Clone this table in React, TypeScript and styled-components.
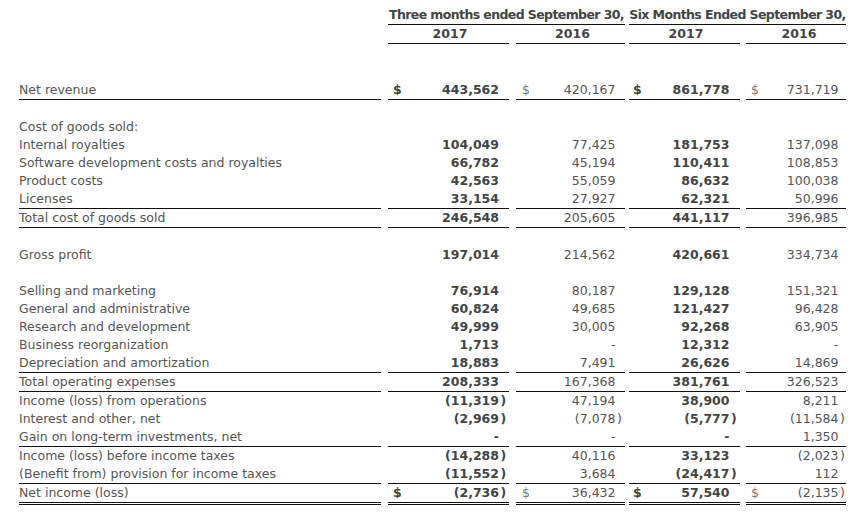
import React from "react";
import styled, { createGlobalStyle, css } from "styled-components";

const GlobalStyle = createGlobalStyle`
  html, body { margin: 0; padding: 0; background: #ffffff; }
  body { font-family: "DejaVu Sans", Verdana, sans-serif; }
`;

type Line = "none" | "single" | "double";

const Page = styled.div`
  width: 862px;
  height: 514px;
  box-sizing: border-box;
  padding: 6px 16px 0 19px;
  font-size: 12.5px;
  color: #555;
  overflow: hidden;
`;

const Row = styled.div`
  display: grid;
  grid-template-columns: 369px 128px 113px 117px 100px;
  min-height: 18px;
`;

const lineCss = (line: Line) =>
  line === "single"
    ? css`border-bottom: 1px solid #111;`
    : line === "double"
    ? css`border-bottom: 3px double #111;`
    : css`border-bottom: 0;`;

const Label = styled.div<{ $line: Line }>`
  margin-right: 7px;
  height: 18px;
  line-height: 18px;
  white-space: nowrap;
  color: #555;
  ${(p) => lineCss(p.$line)}
`;

const HeaderSpan = styled.div<{ $start: number; $mr: number }>`
  grid-column: ${(p) => p.$start} / span 2;
  margin-right: ${(p) => p.$mr}px;
  height: 18px;
  line-height: 18px;
  display: flex;
  justify-content: center;
  white-space: nowrap;
  font-weight: bold;
  letter-spacing: -0.6px;
  color: #444;
  border-bottom: 1px solid #111;
`;

const YearCell = styled.div<{ $mr: number; $pl: number }>`
  margin-right: ${(p) => p.$mr}px;
  padding-left: ${(p) => p.$pl}px;
  height: 18px;
  line-height: 18px;
  text-align: center;
  font-weight: bold;
  color: #444;
  border-bottom: 1px solid #111;
`;

const ValueCell = styled.div<{ $line: Line; $mr: number; $pl: number; $bold: boolean }>`
  display: flex;
  align-items: center;
  margin-right: ${(p) => p.$mr}px;
  padding-left: ${(p) => p.$pl}px;
  height: 18px;
  line-height: 18px;
  white-space: nowrap;
  font-weight: ${(p) => (p.$bold ? "bold" : "normal")};
  color: ${(p) => (p.$bold ? "#444" : "#555")};
  ${(p) => lineCss(p.$line)}
`;

const Dollar = styled.span<{ $bold: boolean }>`
  color: ${(p) => (p.$bold ? "#444" : "#777")};
`;

const Num = styled.span`
  flex: 1;
  text-align: right;
`;

const Paren = styled.span<{ $w: number }>`
  width: ${(p) => p.$w}px;
  flex: none;
  padding-left: 1.5px;
  box-sizing: border-box;
  text-align: left;
`;

const Spacer = styled.div<{ $h: number }>`
  height: ${(p) => p.$h}px;
`;

const cols = [
  { bold: true, pl: 5, parenW: 10, mr: 7 },
  { bold: false, pl: 6, parenW: 9.5, mr: 4 },
  { bold: true, pl: 4, parenW: 10.5, mr: 6 },
  { bold: false, pl: 5, parenW: 7.5, mr: 0 },
];

type DataRow = {
  label: string;
  values?: string[];
  dollar?: boolean;
  line?: Line;
};

const rows: (DataRow | "gap")[] = [
  { label: "Net revenue", values: ["443,562", "420,167", "861,778", "731,719"], dollar: true, line: "single" },
  "gap",
  { label: "Cost of goods sold:" },
  { label: "Internal royalties", values: ["104,049", "77,425", "181,753", "137,098"] },
  { label: "Software development costs and royalties", values: ["66,782", "45,194", "110,411", "108,853"] },
  { label: "Product costs", values: ["42,563", "55,059", "86,632", "100,038"] },
  { label: "Licenses", values: ["33,154", "27,927", "62,321", "50,996"], line: "single" },
  { label: "Total cost of goods sold", values: ["246,548", "205,605", "441,117", "396,985"], line: "single" },
  "gap",
  { label: "Gross profit", values: ["197,014", "214,562", "420,661", "334,734"] },
  "gap",
  { label: "Selling and marketing", values: ["76,914", "80,187", "129,128", "151,321"] },
  { label: "General and administrative", values: ["60,824", "49,685", "121,427", "96,428"] },
  { label: "Research and development", values: ["49,999", "30,005", "92,268", "63,905"] },
  { label: "Business reorganization", values: ["1,713", "-", "12,312", "-"] },
  { label: "Depreciation and amortization", values: ["18,883", "7,491", "26,626", "14,869"], line: "single" },
  { label: "Total operating expenses", values: ["208,333", "167,368", "381,761", "326,523"], line: "single" },
  { label: "Income (loss) from operations", values: ["(11,319)", "47,194", "38,900", "8,211"] },
  { label: "Interest and other, net", values: ["(2,969)", "(7,078)", "(5,777)", "(11,584)"] },
  { label: "Gain on long-term investments, net", values: ["-", "-", "-", "1,350"], line: "single" },
  { label: "Income (loss) before income taxes", values: ["(14,288)", "40,116", "33,123", "(2,023)"] },
  { label: "(Benefit from) provision for income taxes", values: ["(11,552)", "3,684", "(24,417)", "112"], line: "single" },
  { label: "Net income (loss)", values: ["(2,736)", "36,432", "57,540", "(2,135)"], dollar: true, line: "double" },
];

function Value({ v, i, dollar, line }: { v: string; i: number; dollar?: boolean; line: Line }) {
  const c = cols[i];
  const neg = v.endsWith(")");
  return (
    <ValueCell $line={line} $mr={c.mr} $pl={c.pl} $bold={c.bold}>
      {dollar && <Dollar $bold={c.bold}>$</Dollar>}
      <Num>{neg ? v.slice(0, -1) : v}</Num>
      <Paren $w={c.parenW}>{neg ? ")" : ""}</Paren>
    </ValueCell>
  );
}

export default function App() {
  return (
    <>
      <GlobalStyle />
      <Page>
        <Row>
          <div />
          <HeaderSpan $start={2} $mr={4}>Three months ended September 30,</HeaderSpan>
          <HeaderSpan $start={4} $mr={0}>Six Months Ended September 30,</HeaderSpan>
        </Row>
        <Row>
          <div />
          <YearCell $mr={7} $pl={3}>2017</YearCell>
          <YearCell $mr={4} $pl={4}>2016</YearCell>
          <YearCell $mr={6} $pl={3}>2017</YearCell>
          <YearCell $mr={0} $pl={6}>2016</YearCell>
        </Row>
        <Spacer $h={37} />
        {rows.map((r, idx) => {
          if (r === "gap") return <Spacer key={idx} $h={18} />;
          const line = r.line ?? "none";
          return (
            <Row key={idx}>
              <Label $line={line}>{r.label}</Label>
              {r.values
                ? r.values.map((v, i) => <Value key={i} v={v} i={i} dollar={r.dollar} line={line} />)
                : null}
            </Row>
          );
        })}
      </Page>
    </>
  );
}
